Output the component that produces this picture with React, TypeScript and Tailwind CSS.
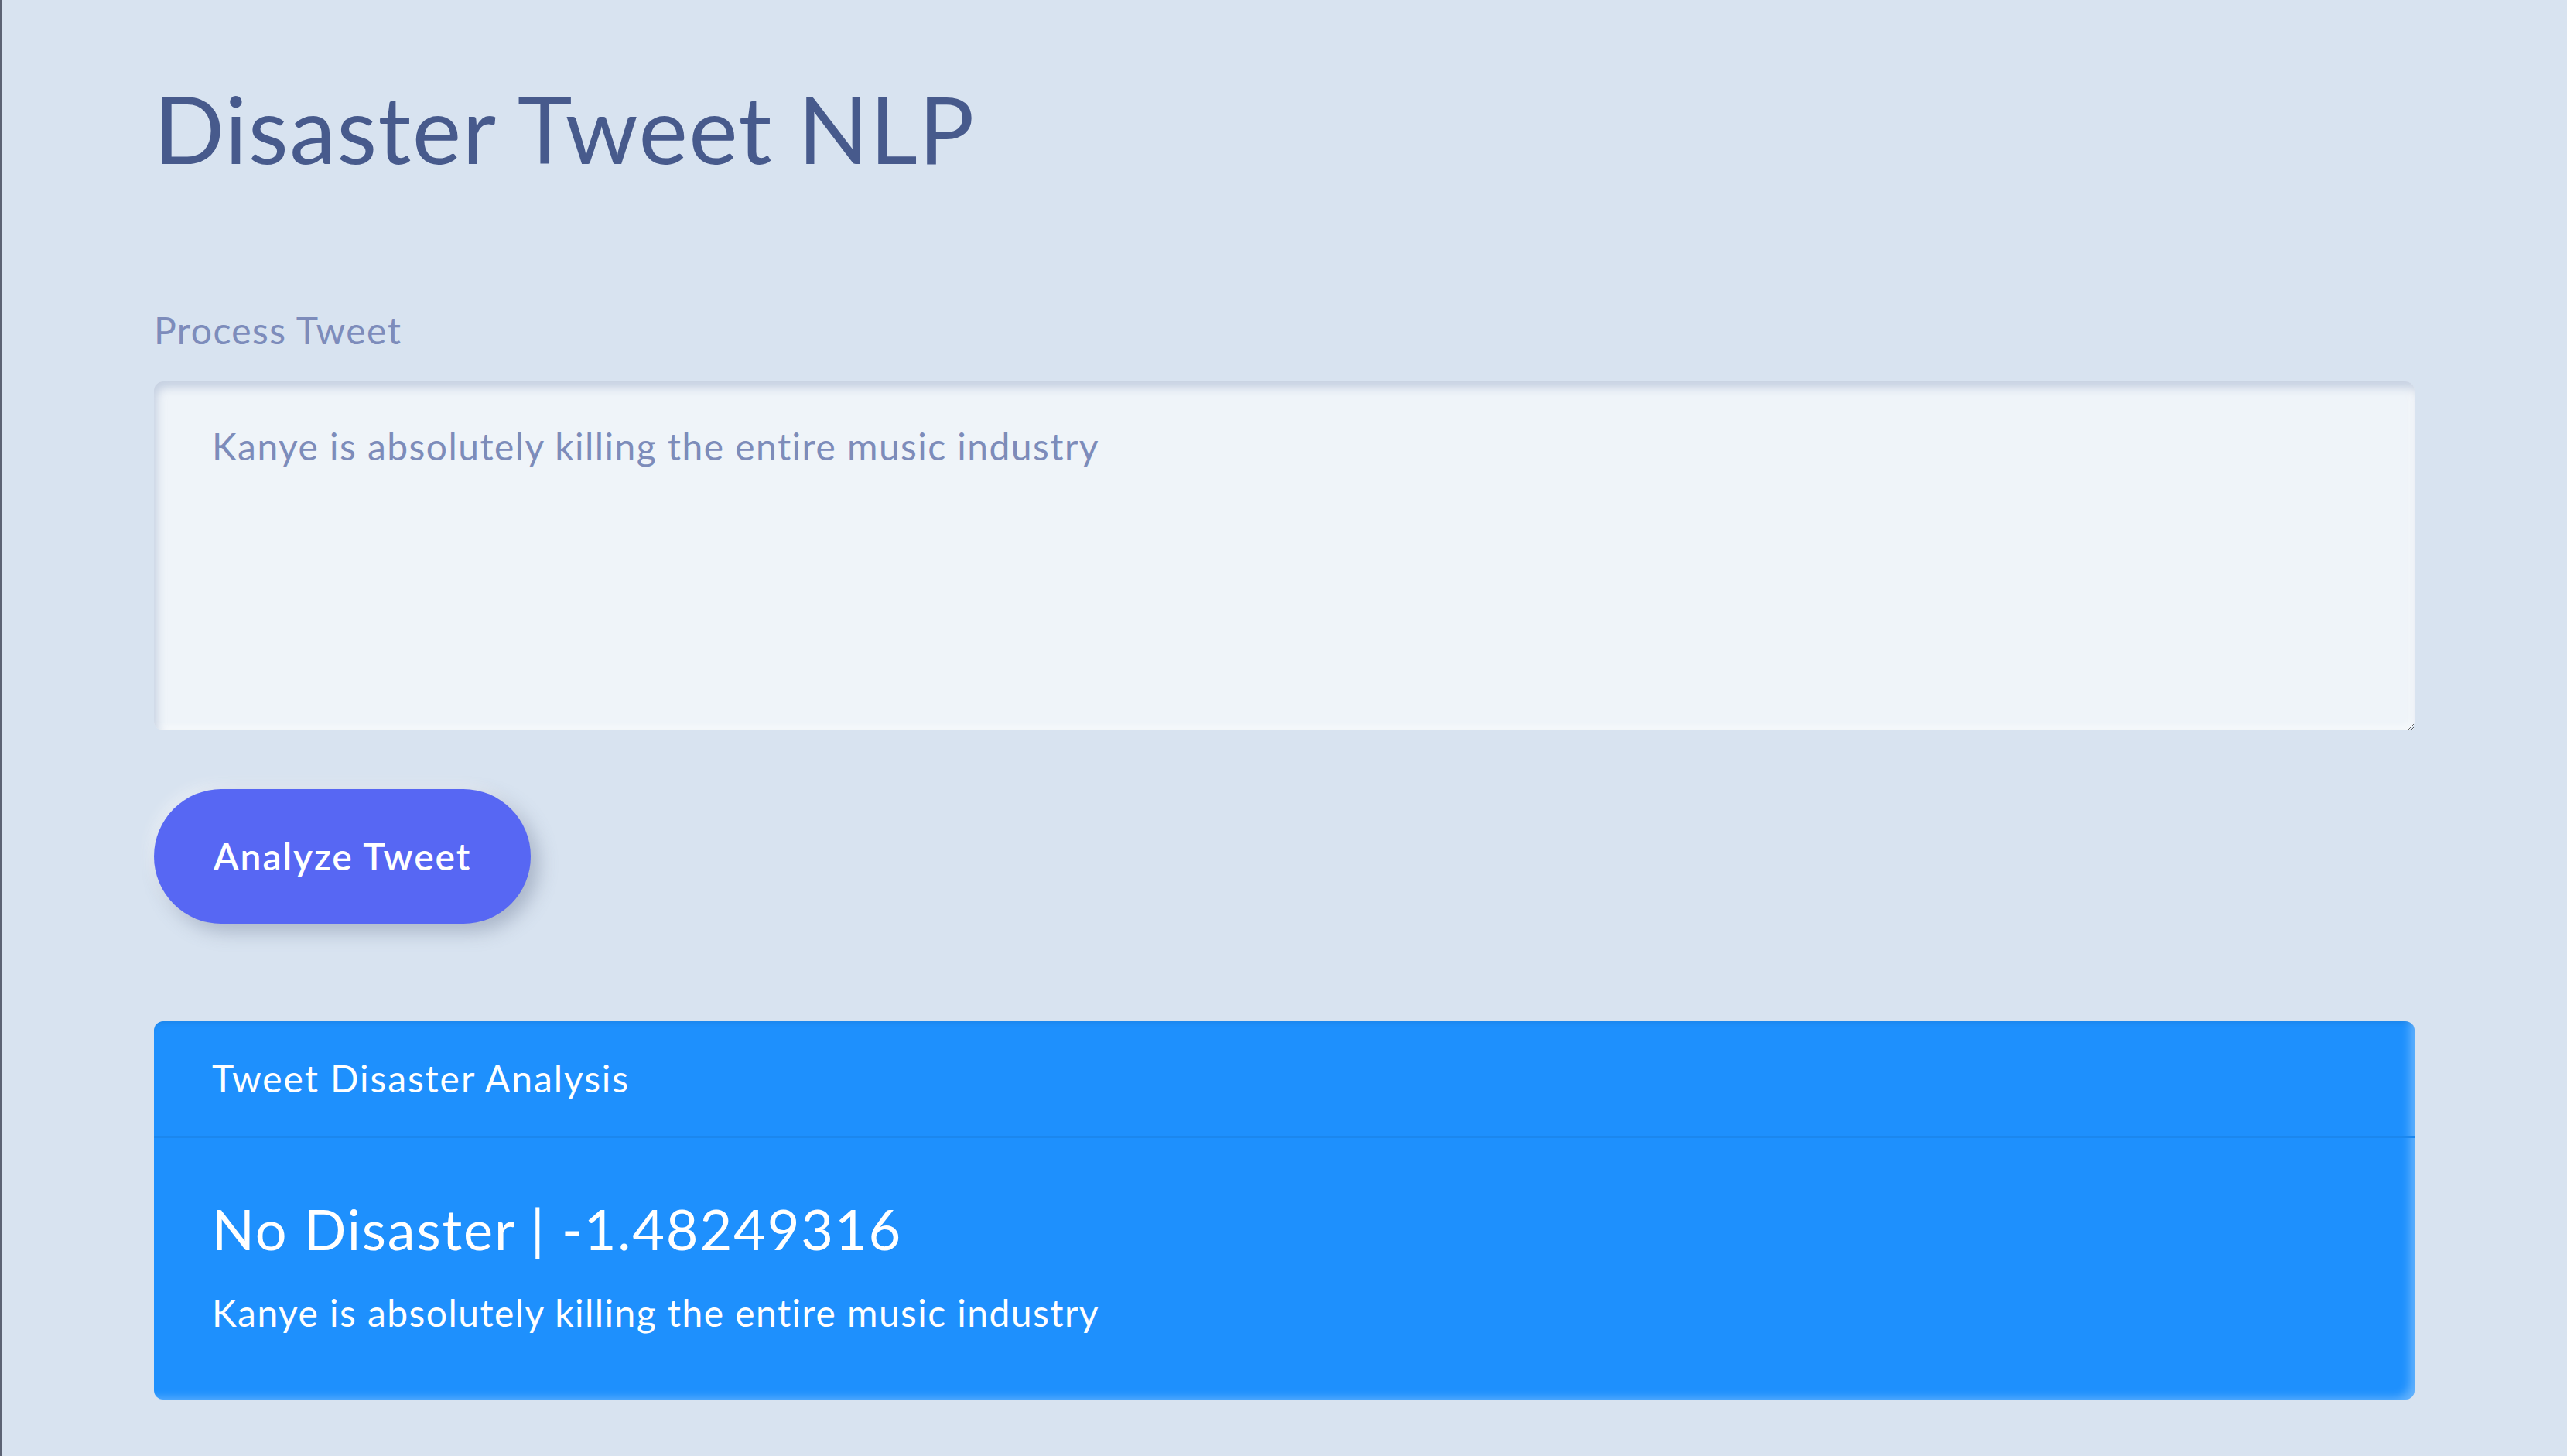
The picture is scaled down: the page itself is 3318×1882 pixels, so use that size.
export default function App() {
  return (
    <div className="min-h-[1882px] w-full border-l-2 border-[#5c6374] bg-[#d8e3f0] font-['Lato','Noto_Sans',sans-serif]">
      <div className="flex flex-col px-[197px] pt-[94px]">
        <h1 className="text-[120px] leading-[144px] font-normal tracking-[0.012em] text-[#475a8c]">Disaster Tweet NLP</h1>

        <label className="mt-[153px] text-[48px] leading-[72px] tracking-[0.03em] text-[#7d8cbb]">Process Tweet</label>

        <textarea
          className="mt-[30px] h-[451px] w-full rounded-[12px] bg-[#eff4f9] px-[75px] pt-[48px] text-[48px] leading-[72px] tracking-[0.03em] text-[#7d8cba] shadow-[inset_4px_8px_12px_rgba(170,185,210,0.6),inset_-4px_-4px_10px_rgba(255,255,255,0.6)] outline-none"
          defaultValue="Kanye is absolutely killing the entire music industry"
        />

        <div className="mt-[76px]">
          <button className="h-[174px] w-[487px] rounded-full bg-[#5767f3] text-[48px] leading-[72px] font-semibold tracking-[0.04em] text-white shadow-[10px_10px_24px_rgba(110,125,150,0.45),-6px_-6px_16px_rgba(255,255,255,0.45)]">
            Analyze Tweet
          </button>
        </div>

        <div className="mt-[126px] overflow-hidden rounded-[12px] bg-[#1e90fd] text-white shadow-[inset_-14px_-10px_12px_-8px_rgba(255,255,255,0.3),inset_0_8px_10px_-8px_rgba(0,0,0,0.12)]">
          <div className="border-b-[3px] border-[#1b87ee] px-[75px] py-[38px] text-[48px] leading-[72px] tracking-[0.04em]">
            Tweet Disaster Analysis
          </div>
          <div className="px-[75px] pt-[74px] pb-[76px]">
            <h4 className="text-[72px] leading-[86px] font-normal tracking-[0.026em]">No Disaster | -1.48249316</h4>
            <p className="mt-[30px] text-[48px] leading-[72px] tracking-[0.03em]">Kanye is absolutely killing the entire music industry</p>
          </div>
        </div>
      </div>
    </div>
  );
}
